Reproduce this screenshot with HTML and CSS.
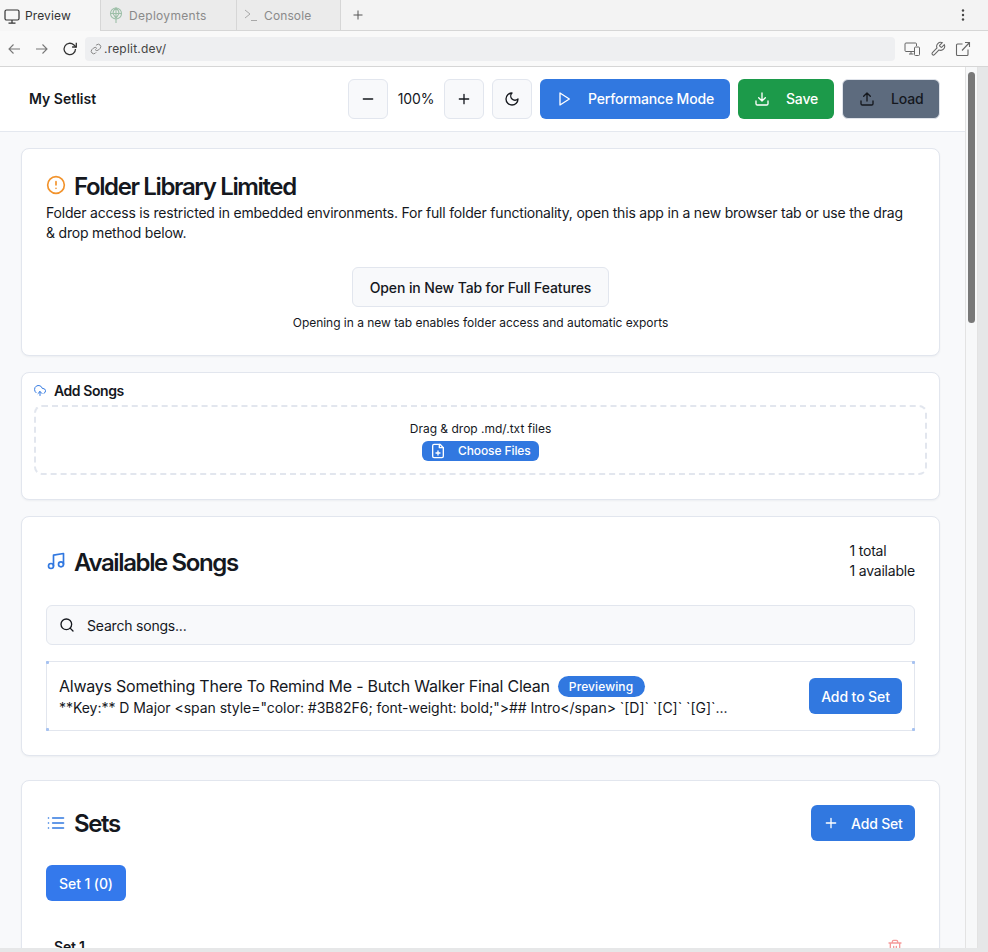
FILE: index.html
```html
<!DOCTYPE html>
<html lang="en">
<head>
<meta charset="utf-8">
<title>My Setlist</title>
<link rel="stylesheet" href="styles.css">
</head>
<body>
<div class="tabs">
  <div class="tab tab-active">
    <svg class="ti" width="18" height="18" viewBox="0 0 18 18" fill="none" stroke="#333" stroke-width="1.2"><rect x="2" y="3" width="14" height="10" rx="1.5"/><path d="M9 13v3M5.5 16.2h7"/></svg>
    <span>Preview</span>
  </div>
  <div class="tab tab-dep">
    <svg class="ti" width="16" height="18" viewBox="0 0 16 18" fill="none" stroke="#9dbfa8" stroke-width="1.1"><circle cx="8" cy="7.5" r="5.5"/><path d="M2.5 7.5h11M8 2v15M5 7.5c0-2 1-4 3-5.5 2 1.500 3 3.500 3 5.500M5 7.500l3 5 3-5"/></svg>
    <span>Deployments</span>
  </div>
  <div class="tab tab-con">
    <svg class="ti" width="14" height="14" viewBox="0 0 14 14" fill="none" stroke="#a8a8a8" stroke-width="1"><path d="M1 2l5 4-5 4M7 12.500h6"/></svg>
    <span>Console</span>
  </div>
  <div class="tab-plus">
    <svg width="10" height="10" viewBox="0 0 10 10" stroke="#555" stroke-width="1"><path d="M5 .5v9M.5 5h9"/></svg>
  </div>
  <div class="tab-fill">
    <svg width="4" height="14" viewBox="0 0 4 14" fill="#444"><circle cx="2" cy="2.500" r="1.200"/><circle cx="2" cy="7" r="1.200"/><circle cx="2" cy="11.500" r="1.200"/></svg>
  </div>
</div>
<div class="urlbar">
  <svg class="nav-back" width="14" height="12" viewBox="0 0 14 12" fill="none" stroke="#777" stroke-width="1.100"><path d="M13 6H2M6.500 1.500L2 6l4.500 4.500"/></svg>
  <svg class="nav-fwd" width="14" height="12" viewBox="0 0 14 12" fill="none" stroke="#777" stroke-width="1.100"><path d="M1 6h11M7.500 1.500L12 6l-4.500 4.500"/></svg>
  <svg class="nav-reload" width="16" height="16" viewBox="0 0 16 16" fill="none" stroke="#333" stroke-width="1.300"><path d="M13.500 8A5.700 5.700 0 1 1 11.700 3.800L14 6"/><path d="M14.300 1.800V6h-4.200"/></svg>
  <div class="address">
    <svg width="12" height="12" viewBox="0 0 24 24" fill="none" stroke="#888" stroke-width="2"><path d="M10 13a5 5 0 0 0 7.500.5l3-3a5 5 0 0 0-7-7l-1.700 1.700"/><path d="M14 11a5 5 0 0 0-7.500-.5l-3 3a5 5 0 0 0 7 7l1.700-1.700"/></svg>
    <span>.replit.dev/</span>
  </div>
  <div class="url-tools">
    <svg width="17" height="16" viewBox="0 0 17 16" fill="none" stroke="#666" stroke-width="1"><path d="M10 10.500H2a1 1 0 0 1-1-1V3a1 1 0 0 1 1-1h9.500a1 1 0 0 1 1 1v2M5 13h4.500M7 10.500V13"/><rect x="10.500" y="6" width="5" height="8.500" rx="1"/></svg>
    <svg width="16" height="16" viewBox="0 0 24 24" fill="none" stroke="#666" stroke-width="1.600"><path d="M14.700 6.300a1 1 0 0 0 0 1.400l1.600 1.600a1 1 0 0 0 1.400 0l3.770-3.770a6 6 0 0 1-7.940 7.940l-6.910 6.910a2.120 2.120 0 0 1-3-3l6.910-6.910a6 6 0 0 1 7.940-7.940z"/></svg>
    <svg width="16" height="16" viewBox="0 0 16 16" fill="none" stroke="#666" stroke-width="1.100"><path d="M7.500 3H2.500a1 1 0 0 0-1 1v9.500a1 1 0 0 0 1 1H12a1 1 0 0 0 1-1V8.500M7 9.500L14.500 1.500M10 1.500h4.500V6"/></svg>
  </div>
</div>
<div class="view">
  <div class="page">
    <header class="topbar">
      <div class="brand">My Setlist</div>
      <div class="controls">
        <button class="btn-square">
          <svg class="ic" viewBox="0 0 24 24"><path d="M5 12h14"/></svg>
        </button>
        <span class="zoom-val">100%</span>
        <button class="btn-square">
          <svg class="ic" viewBox="0 0 24 24"><path d="M5 12h14M12 5v14"/></svg>
        </button>
        <button class="btn-square btn-moon">
          <svg class="ic" viewBox="0 0 24 24"><path d="M12 3a6 6 0 0 0 9 9 9 9 0 1 1-9-9z"/></svg>
        </button>
        <button class="btn btn-blue btn-perf">
          <svg class="ic" viewBox="0 0 24 24"><path d="M6 3l14 9-14 9z"/></svg>
          <span>Performance Mode</span>
        </button>
        <button class="btn btn-green btn-save">
          <svg class="ic" viewBox="0 0 24 24"><path d="M21 15v4a2 2 0 0 1-2 2H5a2 2 0 0 1-2-2v-4M7 10l5 5 5-5M12 15V3"/></svg>
          <span>Save</span>
        </button>
        <button class="btn btn-slate btn-load">
          <svg class="ic" viewBox="0 0 24 24"><path d="M21 15v4a2 2 0 0 1-2 2H5a2 2 0 0 1-2-2v-4M17 8l-5-5-5 5M12 3v12"/></svg>
          <span>Load</span>
        </button>
      </div>
    </header>
    <main class="main">
      <section class="card card-folder">
        <div class="title-row">
          <svg class="ic-title orange" viewBox="0 0 24 24"><circle cx="12" cy="12" r="10"/><path d="M12 8v4M12 16h.01"/></svg>
          <h2>Folder Library Limited</h2>
        </div>
        <p class="folder-text">Folder access is restricted in embedded environments. For full folder functionality, open this app in a new browser tab or use the drag &amp; drop method below.</p>
        <div class="folder-action">
          <button class="btn-open">Open in New Tab for Full Features</button>
          <p class="folder-note">Opening in a new tab enables folder access and automatic exports</p>
        </div>
      </section>
      <section class="card card-add">
        <div class="add-title">
          <svg class="ic-add" viewBox="0 0 24 24"><path d="M12 13v8M8 17l4-4 4 4"/><path d="M20 16.600A5 5 0 0 0 18 7h-1.300A8 8 0 1 0 4 15.300"/></svg>
          <h3>Add Songs</h3>
        </div>
        <div class="dropzone">
          <p>Drag &amp; drop .md/.txt files</p>
          <button class="btn-choose">
            <svg class="ic-file" viewBox="0 0 24 24"><path d="M15 2H6a2 2 0 0 0-2 2v16a2 2 0 0 0 2 2h12a2 2 0 0 0 2-2V7z"/><path d="M14 2v5h6M12 18v-6M9 15h6"/></svg>
            <span>Choose Files</span>
          </button>
        </div>
      </section>
      <section class="card card-songs">
        <div class="songs-head">
          <div class="title-row">
            <svg class="ic-title blue" viewBox="0 0 24 24"><path d="M9 18V5l12-2v13"/><circle cx="6" cy="18" r="3"/><circle cx="18" cy="16" r="3"/></svg>
            <h2>Available Songs</h2>
          </div>
          <div class="counts"><div>1 total</div><div>1 available</div></div>
        </div>
        <div class="search">
          <svg class="ic ic-search" viewBox="0 0 24 24"><circle cx="11" cy="11" r="8"/><path d="M21 21l-4.300-4.300"/></svg>
          <span>Search songs...</span>
        </div>
        <div class="song">
          <div class="song-info">
            <div class="song-title"><span>Always Something There To Remind Me - Butch Walker Final Clean</span><span class="badge">Previewing</span></div>
            <div class="song-preview">**Key:** D Major &lt;span style="color: #3B82F6; font-weight: bold;"&gt;## Intro&lt;/span&gt; `[D]` `[C]` `[G]`...</div>
          </div>
          <button class="btn-addto">Add to Set</button>
          <i class="corner c-tl"></i><i class="corner c-tr"></i><i class="corner c-bl"></i><i class="corner c-br"></i>
        </div>
      </section>
      <section class="card card-sets">
        <div class="sets-head">
          <div class="title-row">
            <svg class="ic-title blue" viewBox="0 0 24 24"><path d="M8 6h13M8 12h13M8 18h13M3 6h.01M3 12h.01M3 18h.01"/></svg>
            <h2>Sets</h2>
          </div>
          <button class="btn btn-blue btn-addset">
            <svg class="ic" viewBox="0 0 24 24"><path d="M5 12h14M12 5v14"/></svg>
            <span>Add Set</span>
          </button>
        </div>
        <button class="set-tab">Set 1 (0)</button>
        <div class="set-row">
          <span class="set-name">Set 1</span>
          <svg class="ic-trash" viewBox="0 0 24 24"><path d="M3 6h18M19 6v14a2 2 0 0 1-2 2H7a2 2 0 0 1-2-2V6M8 6V4a2 2 0 0 1 2-2h4a2 2 0 0 1 2 2v2M10 11v6M14 11v6"/></svg>
        </div>
      </section>
    </main>
  </div>
  <div class="scrollbar"><div class="thumb"></div></div>
  <div class="strip"></div>
</div>
<div class="bottom"></div>
</body>
</html>
```
FILE: styles.css
```css
* { box-sizing: border-box; }
html, body { margin: 0; height: 952px; overflow: hidden; }
body { font-family: Inter, "Liberation Sans", sans-serif; color: #15181e; background: #fff; display: flex; flex-direction: column; }
button { font-family: inherit; cursor: pointer; }
h2, h3, p { margin: 0; }

.tabs { height: 31px; display: flex; background: #f3f3f3; flex: none; font-size: 12px; letter-spacing: .12px; }
.tab { display: flex; align-items: center; height: 31px; border-right: 1px solid #d6d6d6; border-bottom: 1px solid #d6d6d6; background: #ebebeb; color: #8a8a8a; }
.tab-active { width: 101px; background: #f6f6f6; color: #333; padding-left: 3px; gap: 4px; border-bottom: none; }
.tab-dep { width: 136px; padding-left: 7px; gap: 5px; letter-spacing: .3px; }
.tab-con { width: 104px; padding-left: 7px; gap: 6px; }
.tab-plus { width: 34px; height: 31px; display: flex; align-items: center; justify-content: center; border-bottom: 1px solid #d6d6d6; }
.tab-fill { flex: 1; height: 31px; display: flex; align-items: center; justify-content: flex-end; padding-right: 23px; border-bottom: 1px solid #d6d6d6; }

.urlbar { height: 36px; flex: none; background: #f9f9f9; border-bottom: 1px solid #d6d6d6; display: flex; align-items: center; position: relative; padding-left: 7px; }
.nav-fwd { margin-left: 14px; }
.nav-reload { margin-left: 13px; }
.address { width: 810px; height: 24px; margin-left: 7px; border-radius: 4px; background: #eeeff1; display: flex; align-items: center; padding-left: 5px; gap: 2px; font-size: 12px; letter-spacing: .2px; color: #444; }
.url-tools { display: flex; gap: 9px; margin-left: 9px; align-items: center; }

.view { flex: 1; display: flex; min-height: 0; }
.page { width: 965px; background: #f8f9fb; overflow: hidden; flex: none; }
.scrollbar { width: 13px; flex: none; background: #f7f8f9; border-left: 1px solid #e3e3e3; border-right: 1px solid #e3e3e3; padding: 5px 2px 0 2px; }
.thumb { width: 7px; height: 251px; border-radius: 4px; background: #787878; }
.strip { flex: 1; background: #e6e7e8; }
.bottom { height: 4px; background: #e6e7e8; flex: none; }

.topbar { height: 65px; background: #fff; border-bottom: 1px solid #e4e8ef; display: flex; align-items: center; justify-content: space-between; padding: 0 25px 1px 29px; }
.brand { font-size: 14px; font-weight: 600; }
.controls { display: flex; align-items: center; }
.ic { width: 16px; height: 16px; fill: none; stroke: currentColor; stroke-width: 2; stroke-linecap: round; stroke-linejoin: round; flex: none; }
.btn-square { width: 40px; height: 40px; border: 1px solid #e2e6ee; border-radius: 6px; background: #f8f9fb; color: #15181e; display: flex; align-items: center; justify-content: center; padding: 0; }
.btn-moon { margin-left: 8px; }
.zoom-val { width: 56px; text-align: center; font-size: 14px; letter-spacing: -.1px; color: #15181e; }
.btn { height: 40px; border: none; border-radius: 6px; display: flex; align-items: center; font-size: 14px; font-weight: 500; letter-spacing: -.17px; padding: 0; }
.btn-blue { background: #3178e0; color: #fff; }
.btn-green { background: #1c9a4a; color: #fff; }
.btn-slate { background: #5d6b7e; color: #15181e; border: 1px solid #dfe3ea; }
.btn-perf { width: 190px; margin-left: 8px; padding-left: 16px; gap: 16px; }
.btn-save { width: 96px; margin-left: 8px; padding-left: 16px; gap: 16px; }
.btn-load { width: 98px; margin-left: 8px; padding-left: 16px; gap: 16px; }

.main { padding: 16px 25px 0 21px; display: flex; flex-direction: column; }
.card { background: #fff; border: 1px solid #e2e6ee; border-radius: 8px; box-shadow: 0 1px 2px rgba(20, 30, 50, .05); }
.title-row { display: flex; align-items: center; gap: 8px; }
.title-row h2 { font-size: 24px; line-height: 32px; font-weight: 600; letter-spacing: -1.38px; }
.ic-title { width: 20px; height: 20px; fill: none; stroke-width: 2; stroke-linecap: round; stroke-linejoin: round; flex: none; }
.orange { stroke: #f2932c; margin-top: -2px; }
.blue { stroke: #3178e0; }

.card-folder { height: 208px; padding: 20px 24px 0; }
.card-folder .title-row h2 { margin-top: 2px; }
.folder-text { font-size: 14px; line-height: 20px; letter-spacing: -.2px; }
.folder-action { display: flex; flex-direction: column; align-items: center; margin-top: 24px; }
.btn-open { width: 257px; height: 40px; background: #f8f9fb; border: 1px solid #e2e6ee; border-radius: 6px; font-size: 14px; font-weight: 500; letter-spacing: -.12px; color: #15181e; padding: 0; }
.folder-note { font-size: 12px; line-height: 16px; letter-spacing: -.03px; margin-top: 8px; }

.card-add { height: 128px; margin-top: 16px; padding: 8px 12px 0; }
.add-title { display: flex; align-items: center; gap: 8px; height: 19px; }
.add-title h3 { font-size: 14px; font-weight: 600; line-height: 19px; letter-spacing: -.42px; }
.ic-add { width: 12px; height: 12px; fill: none; stroke: #3178e0; stroke-width: 2; stroke-linecap: round; stroke-linejoin: round; }
.dropzone { margin-top: 5px; height: 70px; border: 2px dashed #e2e6ee; border-radius: 8px; display: flex; flex-direction: column; align-items: center; padding-top: 14px; }
.dropzone p { font-size: 12px; line-height: 16px; }
.btn-choose { margin-top: 4px; width: 117px; height: 20px; border: none; border-radius: 6px; background: #3178e0; color: #fff; font-size: 12px; font-weight: 500; letter-spacing: -.1px; display: flex; align-items: center; gap: 12px; padding: 0 0 1px 8px; }
.ic-file { width: 16px; height: 16px; fill: none; stroke: #fff; stroke-width: 2; stroke-linecap: round; stroke-linejoin: round; }

.card-songs { height: 240px; margin-top: 16px; padding: 24px 24px 0; }
.songs-head { display: flex; justify-content: space-between; align-items: center; height: 40px; }
.songs-head .title-row h2 { margin-top: 4px; }
.counts { font-size: 14px; line-height: 20px; letter-spacing: -.2px; }
.search { margin-top: 24px; height: 40px; background: #f8f9fb; border: 1px solid #e2e6ee; border-radius: 6px; display: flex; align-items: center; padding-left: 12px; gap: 12px; font-size: 14px; letter-spacing: -.2px; }
.song { position: relative; margin-top: 16px; height: 70px; border: 1px solid #e2e6ee; display: flex; align-items: center; justify-content: space-between; padding: 0 12px; }
.song-info { min-width: 0; }
.song-title { display: flex; align-items: center; gap: 8px; font-size: 16px; line-height: 24px; font-weight: 400; letter-spacing: -.23px; white-space: nowrap; }
.badge { height: 21px; padding: 0 12px 0 11px; border-radius: 11px; background: #3178e0; color: #fff; font-size: 12px; font-weight: 500; letter-spacing: .1px; line-height: 21px; }
.song-preview { font-size: 14px; line-height: 20px; letter-spacing: -.04px; white-space: nowrap; }
.btn-addto { width: 93px; height: 36px; border: none; border-radius: 6px; background: #3178e0; color: #fff; font-size: 14px; font-weight: 500; letter-spacing: -.1px; padding: 0; }
.corner { position: absolute; width: 3px; height: 3px; border-radius: 1px; background: #a6c2f1; }
.c-tl { left: -1px; top: -1px; }
.c-tr { right: -1px; top: -1px; }
.c-bl { left: -1px; bottom: -1px; }
.c-br { right: -1px; bottom: -1px; }

.card-sets { margin-top: 24px; height: 300px; padding: 24px 24px 0; }
.sets-head { display: flex; justify-content: space-between; align-items: center; height: 36px; }
.sets-head .title-row h2 { margin-top: 2px; }
.btn-addset { width: 104px; height: 36px; padding-left: 12px; gap: 12px; }
.set-tab { display: block; margin-top: 24px; width: 80px; height: 36px; border: none; border-radius: 6px; background: #3479ec; color: #fff; font-size: 14px; font-weight: 500; letter-spacing: -.1px; padding: 0; }
.set-row { display: flex; justify-content: space-between; align-items: center; margin-top: 36px; padding: 0 12px 0 8px; }
.set-name { font-size: 14px; font-weight: 600; line-height: 20px; letter-spacing: -.2px; }
.ic-trash { width: 16px; height: 16px; fill: none; stroke: #f59a9a; stroke-width: 2; stroke-linecap: round; stroke-linejoin: round; }
```
